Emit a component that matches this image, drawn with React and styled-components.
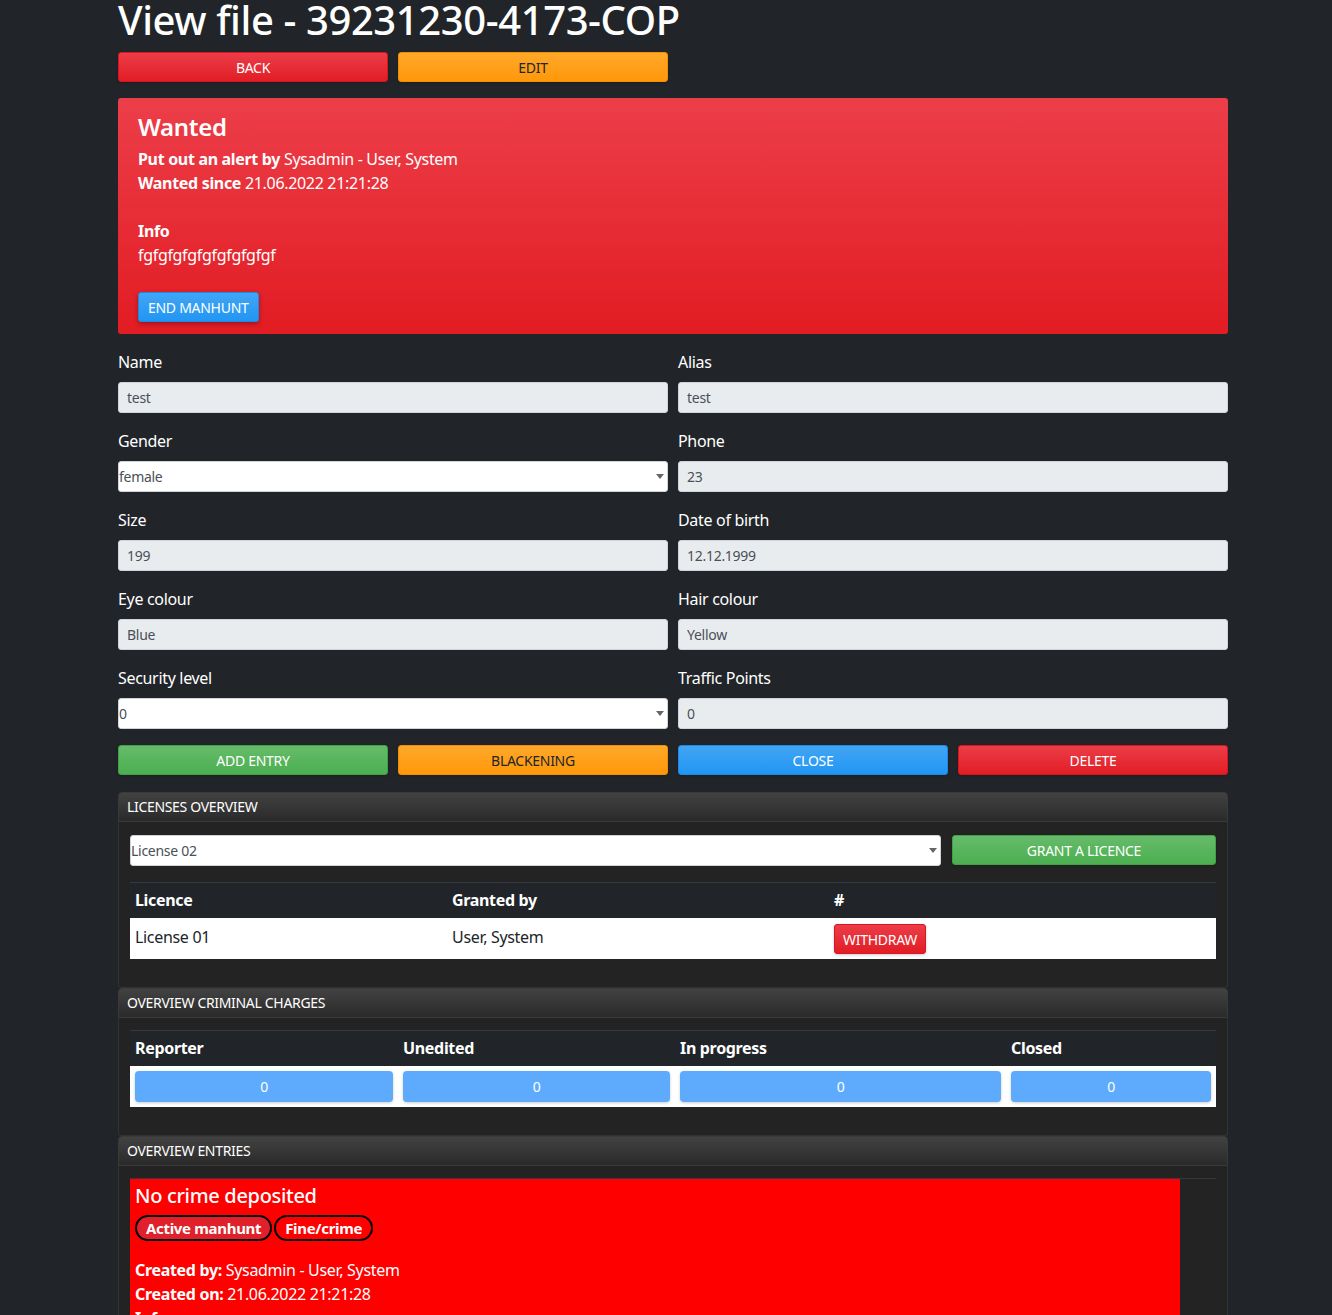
import styled, { createGlobalStyle } from "styled-components"

const GlobalStyle = createGlobalStyle`
    body {
        margin: 0;
        background: #212529;
        color: #fff;
        font-family: "Noto Sans", "Open Sans", sans-serif;
        font-size: 16px;
        line-height: 1.5;
        letter-spacing: -0.02em;
    }
    * { box-sizing: border-box; }
`

const gradients = {
    red: ["#eb3d48", "#e21d25", "#d9151d", "#fff"],
    orange: ["#ffa82a", "#ff980a", "#f39000", "#212529"],
    green: ["#66bb6a", "#4caf50", "#43a047", "#fff"],
    blue: ["#42a5f5", "#2196f3", "#1e88e5", "#fff"],
}

const Page = styled.div`
    width: 1110px;
    margin-left: 118px;
    padding-bottom: 40px;
`

const Title = styled.h1`
    margin: -4px 0 8px;
    font-size: 40px;
    font-weight: 500;
    line-height: 48px;
    letter-spacing: -0.4px;
`

const Grid4 = styled.div`
    display: grid;
    grid-template-columns: repeat(4, 270px);
    gap: 10px;
    margin-bottom: ${({ $mb }) => $mb || "16px"};
`

const Button = styled.button`
    height: 30px;
    padding: 0 10px;
    border: 1px solid ${({ $tone }) => gradients[$tone][2]};
    border-radius: 3px;
    background: linear-gradient(${({ $tone }) => gradients[$tone][0]}, ${({ $tone }) => gradients[$tone][1]});
    color: ${({ $tone }) => gradients[$tone][3]};
    font-family: inherit;
    font-size: 14px;
    letter-spacing: -0.02em;
    text-transform: uppercase;
    box-shadow: 0 1px 3px rgba(0, 0, 0, .2);
    cursor: pointer;
`

const WantedBox = styled.div`
    padding: 14px 20px 12px;
    border-radius: 3px;
    background: linear-gradient(#ec3e49, #e21c23);
`

const WantedTitle = styled.h3`
    margin: 0 0 6px;
    font-size: 24px;
    font-weight: 600;
    line-height: 29px;
`

const Line = styled.div`
    min-height: 24px;
    font-size: 16px;
    line-height: 24px;
`

const EndButton = styled(Button)`
    margin-top: 25px;
    padding: 0 9px;
    box-shadow: 0 2px 5px rgba(0, 0, 0, .3);
`

const Form = styled.div`
    display: grid;
    grid-template-columns: 550px 550px;
    column-gap: 10px;
    margin-top: 16px;
`

const Field = styled.div`
    margin-bottom: 16px;
`

const Label = styled.label`
    display: block;
    margin-bottom: 8px;
    font-size: 16px;
    line-height: 24px;
`

const Input = styled.input`
    display: block;
    width: 100%;
    height: 31px;
    padding: 0 8px;
    border: 1px solid #ced4da;
    border-radius: 3px;
    background: #e9ecef;
    color: #495057;
    font-family: inherit;
    font-size: 14px;
    letter-spacing: -0.02em;
`

const SelectWrap = styled.div`
    position: relative;
    &::after {
        content: "";
        position: absolute;
        right: 4px;
        top: 13px;
        border-left: 4px solid transparent;
        border-right: 4px solid transparent;
        border-top: 5px solid #666;
        pointer-events: none;
    }
`

const Select = styled.select`
    display: block;
    width: 100%;
    height: 31px;
    padding: 0;
    border: 1px solid #ced4da;
    border-radius: 3px;
    background: #fff;
    color: #495057;
    font-family: inherit;
    font-size: 14px;
    letter-spacing: -0.02em;
    appearance: none;
`

const CardHeader = styled.div`
    height: 30px;
    padding: 0 8px;
    border: 1px solid #3a3a3a;
    border-radius: 4px 4px 0 0;
    background: linear-gradient(#424242, #2a2a2a);
    font-size: 14px;
    line-height: 28px;
    text-transform: uppercase;
`

const CardBody = styled.div`
    padding: 12px 11px;
    border: 1px solid #333;
    border-top: 0;
    border-radius: 0 0 4px 4px;
    background: #232323;
`

const LicenceRow = styled.div`
    display: grid;
    grid-template-columns: 811px 264px;
    gap: 11px;
    margin: 1px 0 16px;
`

const Table = styled.table`
    width: 100%;
    border-collapse: collapse;
    margin-bottom: 16px;
    table-layout: fixed;
`

const Th = styled.th`
    width: ${({ $w }) => $w};
    padding: 5px 5px 6px;
    border-top: 1px solid #34393f;
    background: #212529;
    color: #fff;
    font-size: 16px;
    font-weight: 700;
    line-height: 24px;
    text-align: left;
`

const Td = styled.td`
    padding: ${({ $text }) => $text ? "7px 5px 3px" : "5px"};
    background: #fff;
    color: #212529;
    font-size: 16px;
    line-height: 24px;
    vertical-align: top;
`

const CountBox = styled.div`
    height: 31px;
    border-radius: 4px;
    background: #5eabfe;
    color: #fff;
    font-size: 14px;
    line-height: 31px;
    text-align: center;
    box-shadow: 0 1px 3px rgba(0, 0, 0, .2);
`

const Withdraw = styled(Button)`
    padding: 0 8px;
    margin-top: 1px;
`

const EntryRow = styled.div`
    display: flex;
    border-top: 1px solid #34393f;
`

const EntryBox = styled.div`
    width: 1050px;
    padding: 2px 5px 0;
    background: #ff0000;
`

const EntryTitle = styled.h3`
    margin: 0 0 4px;
    font-size: 20px;
    font-weight: 500;
    line-height: 30px;
`

const Badges = styled.div`
    display: flex;
    gap: 2px;
    margin-bottom: 17px;
`

const Badge = styled.span`
    padding: 0 9px;
    border: 2px solid #000;
    border-radius: 14px;
    background: ${({ $filled }) => $filled ? "#e0202a" : "transparent"};
    font-size: 15px;
    font-weight: 700;
    line-height: 22px;
`

const fields = [
    ["Name", "test"],
    ["Alias", "test"],
    ["Gender", "female", true],
    ["Phone", "23"],
    ["Size", "199"],
    ["Date of birth", "12.12.1999"],
    ["Eye colour", "Blue"],
    ["Hair colour", "Yellow"],
    ["Security level", "0", true],
    ["Traffic Points", "0"],
]

const charges = [
    ["Reporter", "268px"],
    ["Unedited", "277px"],
    ["In progress", "331px"],
    ["Closed", "auto"],
]

const App = () => {
    return (
        <>
            <GlobalStyle />
            <Page>
                <Title>View file - 39231230-4173-COP</Title>
                <Grid4>
                    <Button $tone="red">Back</Button>
                    <Button $tone="orange">Edit</Button>
                </Grid4>

                <WantedBox>
                    <WantedTitle>Wanted</WantedTitle>
                    <Line><b>Put out an alert by</b> Sysadmin - User, System</Line>
                    <Line><b>Wanted since</b> 21.06.2022 21:21:28</Line>
                    <Line />
                    <Line><b>Info</b></Line>
                    <Line>fgfgfgfgfgfgfgfgfgf</Line>
                    <EndButton $tone="blue">End manhunt</EndButton>
                </WantedBox>

                <Form>
                    {fields.map(([label, value, select]) => (
                        <Field key={label}>
                            <Label>{label}</Label>
                            {select ? (
                                <SelectWrap>
                                    <Select defaultValue={value}>
                                        <option>{value}</option>
                                    </Select>
                                </SelectWrap>
                            ) : (
                                <Input value={value} disabled readOnly />
                            )}
                        </Field>
                    ))}
                </Form>

                <Grid4 $mb="17px">
                    <Button $tone="green">Add entry</Button>
                    <Button $tone="orange">Blackening</Button>
                    <Button $tone="blue">Close</Button>
                    <Button $tone="red">Delete</Button>
                </Grid4>

                <section>
                    <CardHeader>Licenses overview</CardHeader>
                    <CardBody>
                        <LicenceRow>
                            <SelectWrap>
                                <Select defaultValue="License 02">
                                    <option>License 02</option>
                                </Select>
                            </SelectWrap>
                            <Button $tone="green">Grant a licence</Button>
                        </LicenceRow>
                        <Table>
                            <thead>
                                <tr>
                                    <Th $w="317px">Licence</Th>
                                    <Th $w="382px">Granted by</Th>
                                    <Th>#</Th>
                                </tr>
                            </thead>
                            <tbody>
                                <tr>
                                    <Td $text>License 01</Td>
                                    <Td $text>User, System</Td>
                                    <Td><Withdraw $tone="red">Withdraw</Withdraw></Td>
                                </tr>
                            </tbody>
                        </Table>
                    </CardBody>
                </section>

                <section>
                    <CardHeader>Overview criminal charges</CardHeader>
                    <CardBody>
                        <Table>
                            <thead>
                                <tr>
                                    {charges.map(([name, w]) => <Th key={name} $w={w}>{name}</Th>)}
                                </tr>
                            </thead>
                            <tbody>
                                <tr>
                                    {charges.map(([name]) => <Td key={name}><CountBox>0</CountBox></Td>)}
                                </tr>
                            </tbody>
                        </Table>
                    </CardBody>
                </section>

                <section>
                    <CardHeader>Overview entries</CardHeader>
                    <CardBody>
                        <EntryRow>
                            <EntryBox>
                                <EntryTitle>No crime deposited</EntryTitle>
                                <Badges>
                                    <Badge $filled>Active manhunt</Badge>
                                    <Badge>Fine/crime</Badge>
                                </Badges>
                                <Line><b>Created by:</b> Sysadmin - User, System</Line>
                                <Line><b>Created on:</b> 21.06.2022 21:21:28</Line>
                                <Line><b>Info</b></Line>
                                <Line>fgfgfgfgfgfgfgfgfgf</Line>
                            </EntryBox>
                        </EntryRow>
                    </CardBody>
                </section>
            </Page>
        </>
    )
}

export default App
